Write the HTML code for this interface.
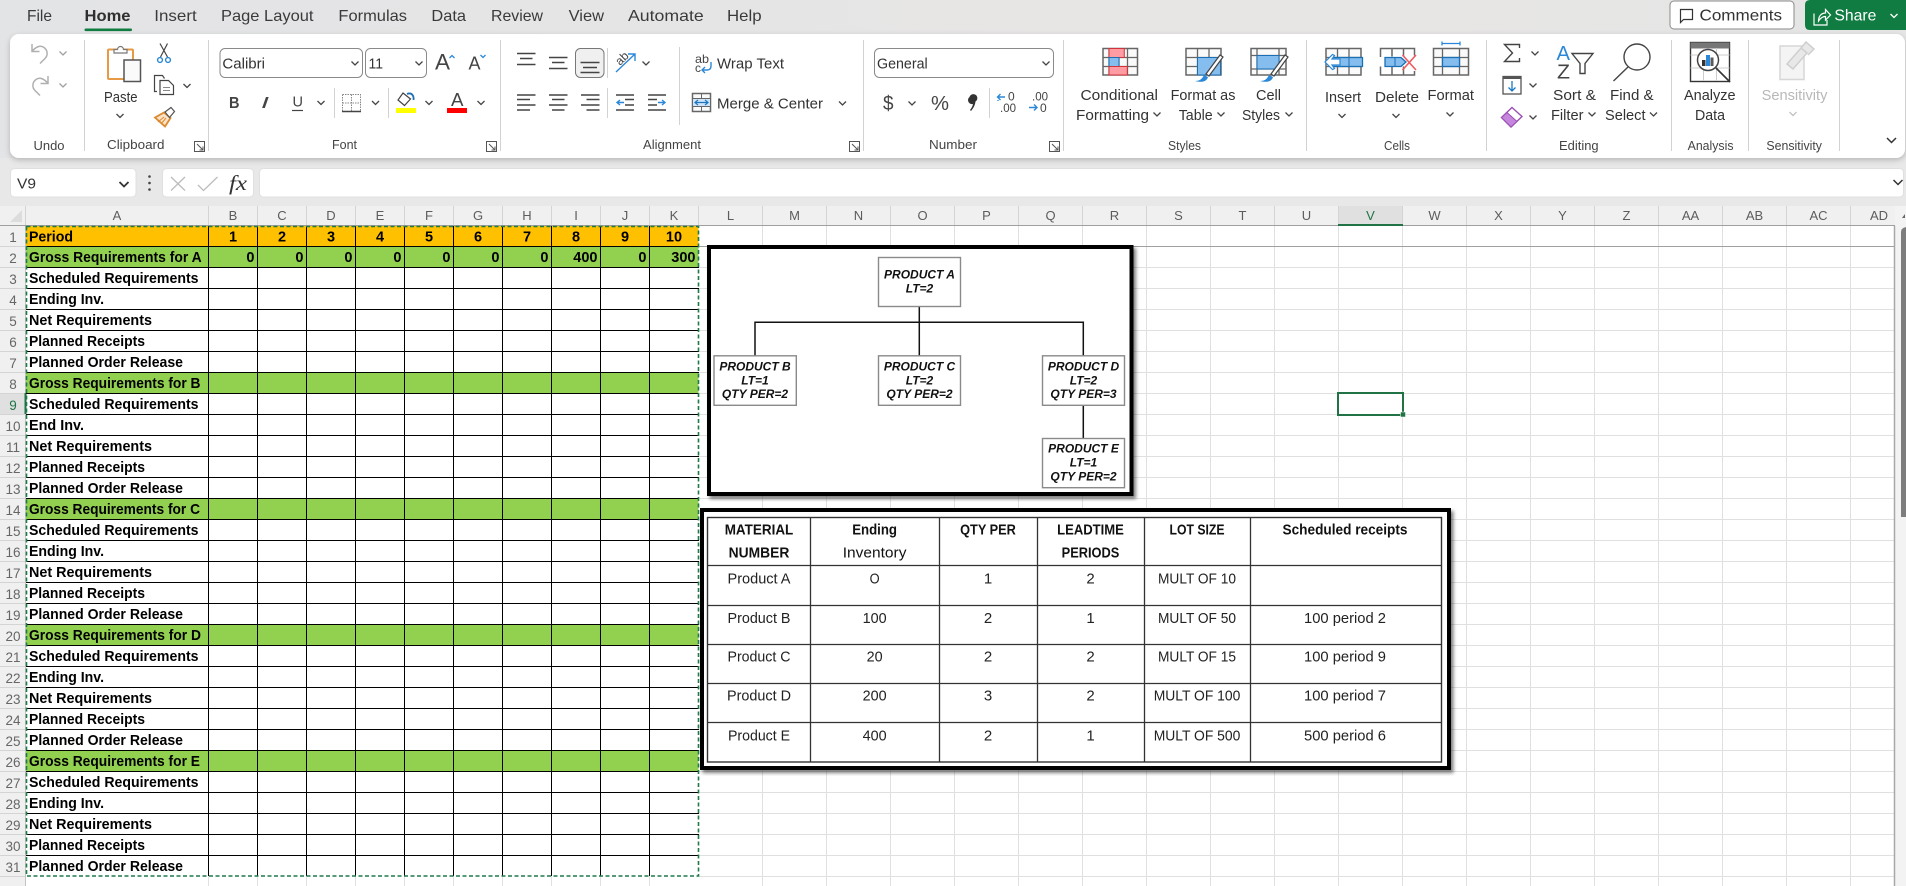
<!DOCTYPE html>
<html lang="en"><head><meta charset="utf-8"><title>Excel MRP</title>
<style>
html,body{margin:0;padding:0;width:1906px;height:886px;overflow:hidden;background:#fff}
svg{display:block}
text{font-family:"Liberation Sans",Arial,sans-serif;white-space:pre}
.tab{font-size:16px;fill:#3a3a3a}
.rb{font-size:14.5px;fill:#333}
.lb{font-size:13px;fill:#444}
.hd{font-size:13px;fill:#5c5c5c;text-anchor:middle}
.rn{font-size:13.5px;fill:#666;text-anchor:middle}
.a{font-size:15px;font-weight:bold;fill:#000}
.n{font-size:14.5px;font-weight:bold;fill:#000}
.pr{font-size:12px;font-weight:bold;font-style:italic;fill:#111;text-anchor:middle}
.tb{font-size:15px;fill:#222;text-anchor:middle}
.tbh{font-size:15px;font-weight:bold;fill:#111;text-anchor:middle}
.s{fill:none;stroke:#444;stroke-width:1.4}
.sep{stroke:#d2d2d2;stroke-width:1;fill:none}
.ch{fill:none;stroke:#444;stroke-width:1.3}
.tg{fill:#fafafa;stroke:#666;stroke-width:1.5}
.bl{fill:#85bdee;stroke:#1a6fb5;stroke-width:1.3}
</style></head><body>
<svg xmlns="http://www.w3.org/2000/svg" width="1906" height="886" viewBox="0 0 1906 886">
<defs>
<linearGradient id="bg" x1="0" x2="1" y1="0" y2="0"><stop offset="0" stop-color="#e3e4e6"/><stop offset=".65" stop-color="#e8e6e5"/><stop offset="1" stop-color="#e5e5e5"/></linearGradient>
<filter id="sh" x="-2%" y="-10%" width="104%" height="125%"><feDropShadow dx="0" dy="2" stdDeviation="3" flood-color="#000" flood-opacity=".22"/></filter>
<filter id="ish" x="-3%" y="-3%" width="106%" height="106%"><feDropShadow dx="2.5" dy="3" stdDeviation="1.8" flood-color="#000" flood-opacity=".5"/></filter>
<path id="c" d="M-3.5-1.5 0 2 3.5-1.5" fill="none" stroke="#444" stroke-width="1.3"/>
<path id="dl" d="M.5.5h10v10H.5z M.5.5v10h10 M3 3l6 6M9 5.5V9H5.5" fill="none" stroke="#555" stroke-width="1"/>
</defs>

<!-- top background -->
<rect width="1906" height="206" fill="url(#bg)"/>
<rect y="158" width="1906" height="48" fill="#e8e8e8"/>

<!-- tabs -->
<text class="tab" x="27" y="21" textLength="25" lengthAdjust="spacingAndGlyphs">File</text>
<text class="tab" x="84.5" y="21" textLength="46" lengthAdjust="spacingAndGlyphs" style="font-weight:bold;fill:#2f2f2f">Home</text>
<rect x="84.5" y="28.5" width="47.5" height="2.6" rx="1.3" fill="#107c41"/>
<text class="tab" x="154.3" y="21" textLength="42.4" lengthAdjust="spacingAndGlyphs">Insert</text>
<text class="tab" x="221" y="21" textLength="92.5" lengthAdjust="spacingAndGlyphs">Page Layout</text>
<text class="tab" x="338.4" y="21" textLength="68.6" lengthAdjust="spacingAndGlyphs">Formulas</text>
<text class="tab" x="431.4" y="21" textLength="34.6" lengthAdjust="spacingAndGlyphs">Data</text>
<text class="tab" x="491" y="21" textLength="52" lengthAdjust="spacingAndGlyphs">Review</text>
<text class="tab" x="568.6" y="21" textLength="35.4" lengthAdjust="spacingAndGlyphs">View</text>
<text class="tab" x="628" y="21" textLength="75.7" lengthAdjust="spacingAndGlyphs">Automate</text>
<text class="tab" x="727" y="21" textLength="34.6" lengthAdjust="spacingAndGlyphs">Help</text>

<!-- comments / share -->
<rect x="1670" y="1" width="124" height="28" rx="4" fill="#fff" stroke="#8a8a8a"/>
<path d="M1680.5 9.5h12v10h-9l-3 3z" fill="none" stroke="#333" stroke-width="1.2"/>
<text class="tab" x="1699.5" y="20.5" textLength="82.5" lengthAdjust="spacingAndGlyphs" style="fill:#333">Comments</text>
<path d="M1810 0h100v30h-100q-5 0-5-5V5q0-5 5-5z" fill="#107c41"/>
<path d="M1814 13.5v11.5h13v-5 M1818.5 21c0-5 3-8 7-8v-3.500l5 5.500-5 5v-3.500c-3 0-5 1.500-7 4.500z" fill="none" stroke="#fff" stroke-width="1.2"/>
<text class="tab" x="1834.400" y="20.500" textLength="42" lengthAdjust="spacingAndGlyphs" style="fill:#fff">Share</text>
<path d="M1890.500 14l3.500 3.500 3.500-3.500" fill="none" stroke="#fff" stroke-width="1.3"/>

<!-- ribbon -->
<rect x="10" y="34" width="1895" height="124" rx="9" fill="#fff" filter="url(#sh)"/>
<path class="sep" d="M84.500 40v111M208.500 40v111M500.500 40v111M863.500 40v111M1063.500 40v111M1306.500 40v111M1486.500 40v111M1671.500 40v111M1748.500 40v111M1839.500 40v111"/>

<!-- group labels -->
<text class="lb" x="33.500" y="150" textLength="31" lengthAdjust="spacingAndGlyphs">Undo</text>
<text class="lb" x="107" y="149" textLength="57.500" lengthAdjust="spacingAndGlyphs">Clipboard</text>
<text class="lb" x="332" y="149" textLength="25" lengthAdjust="spacingAndGlyphs">Font</text>
<text class="lb" x="643" y="149" textLength="58" lengthAdjust="spacingAndGlyphs">Alignment</text>
<text class="lb" x="929" y="149" textLength="48" lengthAdjust="spacingAndGlyphs">Number</text>
<text class="lb" x="1168" y="150" textLength="33" lengthAdjust="spacingAndGlyphs">Styles</text>
<text class="lb" x="1384" y="150" textLength="26" lengthAdjust="spacingAndGlyphs">Cells</text>
<text class="lb" x="1559" y="150" textLength="39.600" lengthAdjust="spacingAndGlyphs">Editing</text>
<text class="lb" x="1687.600" y="150" textLength="45.900" lengthAdjust="spacingAndGlyphs">Analysis</text>
<text class="lb" x="1766.400" y="150" textLength="55.600" lengthAdjust="spacingAndGlyphs">Sensitivity</text>
<use href="#dl" x="194" y="141"/><use href="#dl" x="486" y="141"/><use href="#dl" x="849" y="141"/><use href="#dl" x="1049" y="141"/>

<!-- undo redo -->
<path d="M32 44v7.500h7.500M32 51.500c3-4 8-7 12-4 4 3 4 8 1 11l-5 5" fill="none" stroke="#b0b0b0" stroke-width="1.500"/>
<path d="M48 76v7.500h-7.500M48 83.500c-3-4-8-7-12-4-4 3-4 8-1 11l5 5" fill="none" stroke="#b0b0b0" stroke-width="1.500"/>
<g opacity=".5"><use href="#c" x="63" y="53"/><use href="#c" x="63" y="85"/></g>

<!-- clipboard -->
<rect x="108" y="49.500" width="25" height="29.500" rx="1" fill="#fff" stroke="#e69a45" stroke-width="2"/>
<path d="M114 53v-3.500h3.500a3 3 0 0 1 6 0h3.500v3.500z" fill="#fff" stroke="#777" stroke-width="1.200"/>
<rect x="124" y="60" width="16.500" height="21.500" fill="#fafafa" stroke="#555" stroke-width="1.500"/>
<text class="rb" x="104" y="102" textLength="33.500" lengthAdjust="spacingAndGlyphs">Paste</text>
<use href="#c" x="120" y="115.500"/>
<path d="M167.500 43.500 160.500 57M160 43.500 167.500 57" fill="none" stroke="#444" stroke-width="1.200"/>
<circle cx="160" cy="60" r="2.400" fill="none" stroke="#2b88d8" stroke-width="1.400"/><circle cx="168" cy="60" r="2.400" fill="none" stroke="#2b88d8" stroke-width="1.400"/>
<path d="M157 91.500h-2.500v-16h8l2 3" fill="none" stroke="#444" stroke-width="1.200"/>
<path d="M160 80.500h8.500l5 5v9h-13.500z" fill="#fff" stroke="#444" stroke-width="1.200"/>
<path d="M163 87.500h7M163 90.500h7" stroke="#888"/>
<use href="#c" x="187" y="85.500"/>
<path d="M155 117.500l9-5 6.500 5.500-5.500 8.500z" fill="#fbe3c8" stroke="#dc8a30" stroke-width="1.800"/>
<path d="M158 122l6-5M161 124l5-6" stroke="#dc8a30"/>
<path d="M165 112l6-4.500 3.500 4-5 6z" fill="#fff" stroke="#555" stroke-width="1.200"/>

<!-- font -->
<rect x="220" y="48.500" width="142.500" height="29" rx="5" fill="#fff" stroke="#8a8a8a"/>
<rect x="365.500" y="48.500" width="61" height="29" rx="5" fill="#fff" stroke="#8a8a8a"/>
<text x="222.400" y="68.300" font-size="14.500" fill="#333" textLength="42.600" lengthAdjust="spacingAndGlyphs">Calibri</text>
<use href="#c" x="355" y="63"/>
<text x="368.500" y="68.300" font-size="14.500" fill="#333" textLength="14.500" lengthAdjust="spacingAndGlyphs">11</text>
<use href="#c" x="419" y="63"/>
<text x="435" y="69.500" font-size="22" fill="#444" textLength="15" lengthAdjust="spacingAndGlyphs">A</text>
<path d="M449.500 58l2.500-2.500 2.500 2.500" fill="none" stroke="#2b88d8" stroke-width="1.300"/>
<text x="468.500" y="69.500" font-size="18" fill="#444" textLength="12" lengthAdjust="spacingAndGlyphs">A</text>
<path d="M480.500 55l2.500 2.500 2.500-2.500" fill="none" stroke="#2b88d8" stroke-width="1.300"/>
<text x="229" y="108" font-size="16" font-weight="bold" fill="#444" textLength="10.500" lengthAdjust="spacingAndGlyphs">B</text>
<text x="261" y="108" font-size="16" font-style="italic" fill="#444" textLength="8" lengthAdjust="spacingAndGlyphs">I</text>
<text x="292.500" y="106.500" font-size="15" fill="#444" textLength="10.500" lengthAdjust="spacingAndGlyphs">U</text>
<path d="M292 110.500h11" stroke="#444" stroke-width="1.200"/>
<use href="#c" x="321" y="102.500"/>
<path class="sep" d="M334.500 88v30M388.500 88v30M607.500 48v30M607.500 88v30M679.500 47v78M989.500 88v30"/>
<path d="M342.500 94.500h18v17M342.500 94.500v17M351.500 94.500v17M342.500 103h18" fill="none" stroke="#888" stroke-width="1" stroke-dasharray="1.500 1"/>
<path d="M342 111.500h19" stroke="#444" stroke-width="1.500"/>
<use href="#c" x="375.500" y="102.500"/>
<path d="M403 93l-5 7 6.500 5.500 6-6.500z" fill="#fff" stroke="#444" stroke-width="1.200"/>
<path d="M407 94c5-2 7 2 6.500 6" fill="none" stroke="#1f6fb5" stroke-width="1.800"/>
<rect x="396" y="108" width="20" height="5" fill="#ffff00"/>
<use href="#c" x="429" y="102.500"/>
<text x="451" y="106" font-size="18" fill="#444" textLength="12.500" lengthAdjust="spacingAndGlyphs">A</text>
<rect x="447" y="108" width="20" height="5" fill="#ff0000"/>
<use href="#c" x="481" y="102.500"/>

<!-- alignment -->
<path d="M517 53.500h18.500M520 58.500h12.500M517 64.500h18.500M549 57.500h18.500M552 62.500h12.500M549 68.500h18.500" class="s"/>
<rect x="575.500" y="48.500" width="28.500" height="29" rx="5" fill="#f0f0f0" stroke="#777"/>
<path d="M580.500 62.500h19M583 67.500h14M580.500 72.500h19" class="s"/>
<text transform="translate(620,66) rotate(-45)" font-size="12" fill="#444">ab</text>
<path d="M616 72l19-18M628 54h7v7" fill="none" stroke="#2b88d8" stroke-width="1.400"/>
<use href="#c" x="646" y="63"/>
<text x="695" y="63" font-size="12" fill="#444" textLength="14" lengthAdjust="spacingAndGlyphs">ab</text>
<text x="695" y="72" font-size="12" fill="#444">c</text>
<path d="M711 62v4q0 4-4 4h-5M705 67l-3 3 3 3" fill="none" stroke="#2b88d8" stroke-width="1.400"/>
<text class="rb" x="717" y="68.500" textLength="67" lengthAdjust="spacingAndGlyphs">Wrap Text</text>
<path d="M517 95h18.500M517 99.500h13M517 105h18.500M517 110h13" class="s"/>
<path d="M549 95h18.500M552 99.500h12.500M549 105h18.500M552 110h12.500" class="s"/>
<path d="M581 95h18.500M586.500 99.500h13M581 105h18.500M586.500 110h13" class="s"/>
<path d="M616 95h18M625 99.500h9M625 105h9M616 110h18" class="s"/>
<path d="M624 102.500h-7M620 100l-3 2.500 3 2.500" fill="none" stroke="#2b88d8" stroke-width="1.400"/>
<path d="M648 95h18M648 99.500h9M648 105h9M648 110h18" class="s"/>
<path d="M658 102.500h7M662 100l3 2.500-3 2.500" fill="none" stroke="#2b88d8" stroke-width="1.400"/>
<rect x="692.500" y="93.500" width="18" height="18" fill="#fafafa" stroke="#666" stroke-width="1.500"/>
<rect x="693" y="98.500" width="17" height="8" fill="#cfe4f7"/>
<path d="M692.500 98.500h18M692.500 106.500h18M701.500 93.500v5M701.500 106.500v5" stroke="#666"/>
<path d="M695 102.500h13M698 100l-3 2.500 3 2.500M705 100l3 2.500-3 2.500" fill="none" stroke="#1a78c2" stroke-width="1.200"/>
<text class="rb" x="717" y="108.700" textLength="106" lengthAdjust="spacingAndGlyphs">Merge &amp; Center</text>
<use href="#c" x="842.500" y="103"/>

<!-- number -->
<rect x="874.500" y="48.500" width="179" height="29" rx="5" fill="#fff" stroke="#8a8a8a"/>
<text x="877" y="68.300" font-size="14.500" fill="#333" textLength="50.700" lengthAdjust="spacingAndGlyphs">General</text>
<use href="#c" x="1046" y="63"/>
<text x="883" y="110" font-size="20" fill="#444" textLength="10.500" lengthAdjust="spacingAndGlyphs">$</text>
<use href="#c" x="912" y="103"/>
<text x="931" y="110" font-size="20" fill="#444" textLength="18" lengthAdjust="spacingAndGlyphs">%</text>
<path d="M969.500 97a4 4 0 1 1 6 4.500q-.5 5-4.500 9.500l-1-1q2.500-3 3-6a4 4 0 0 1-3.500-7z" fill="#333"/>
<path d="M1005 97h-7.500M1000.500 94l-3 3 3 3M998 100v1" fill="none" stroke="#2b88d8" stroke-width="1.400"/>
<text x="1008" y="100.500" font-size="12" fill="#444">0</text>
<text x="1000" y="112" font-size="12" fill="#444" textLength="16" lengthAdjust="spacingAndGlyphs">.00</text>
<text x="1032" y="100.500" font-size="12" fill="#444" textLength="16" lengthAdjust="spacingAndGlyphs">.00</text>
<path d="M1029 107.500h8M1034 104.500l3 3-3 3" fill="none" stroke="#2b88d8" stroke-width="1.400"/>
<text x="1040" y="112" font-size="12" fill="#444">0</text>

<!-- conditional formatting -->
<path class="tg" d="M1103 48.500h34.500v26.500h-34.500z"/>
<path d="M1109 48.500v26.500M1119 48.500v26.500M1127.500 48.500v26.500M1103 57.500h34.500M1103 66.500h34.500" stroke="#666" stroke-width="1.300"/>
<rect x="1109" y="48.500" width="15.300" height="9" fill="#ff9ca3" stroke="#d13438"/>
<rect x="1109" y="57.500" width="10" height="9" fill="#85bdee" stroke="#1a6fb5"/>
<rect x="1109" y="66.500" width="18.300" height="8.500" fill="#ff9ca3" stroke="#d13438"/>
<text class="rb" x="1080.500" y="100" textLength="77.500" lengthAdjust="spacingAndGlyphs">Conditional</text>
<text class="rb" x="1076" y="120" textLength="73" lengthAdjust="spacingAndGlyphs">Formatting</text>
<use href="#c" x="1157" y="114"/>

<!-- format as table -->
<path class="tg" d="M1186 48.500h35v26.500h-35z"/>
<path d="M1197.500 48.500v26.500M1209 48.500v26.500M1186 57.500h35M1186 66.500h35" stroke="#666" stroke-width="1.300"/>
<rect x="1197.500" y="57.500" width="23" height="17.500" fill="#85bdee" stroke="#1a6fb5"/>
<path d="M1223 57l-14 19-3-2 14-19z" fill="#fff" stroke="#444" stroke-width="1.200"/>
<path d="M1195 81c5 0 7-2 9-6l4 2c-1 4-5 6-13 4z" fill="#2b88d8"/>
<text class="rb" x="1170.600" y="100" textLength="64.800" lengthAdjust="spacingAndGlyphs">Format as</text>
<text class="rb" x="1178.700" y="120" textLength="34" lengthAdjust="spacingAndGlyphs">Table</text>
<use href="#c" x="1221" y="114"/>

<!-- cell styles -->
<path class="tg" d="M1251 48.500h35v26.500h-35z"/>
<path d="M1257 48.500v26.500M1279 48.500v26.500M1251 55.500h35M1251 69h35" stroke="#666" stroke-width="1.300"/>
<rect x="1257" y="55.500" width="22" height="13.500" fill="#85bdee" stroke="#1a6fb5"/>
<path d="M1288 57l-14 19-3-2 14-19z" fill="#fff" stroke="#444" stroke-width="1.200"/>
<path d="M1260 81c5 0 7-2 9-6l4 2c-1 4-5 6-13 4z" fill="#2b88d8"/>
<text class="rb" x="1256" y="100" textLength="25" lengthAdjust="spacingAndGlyphs">Cell</text>
<text class="rb" x="1242" y="120" textLength="38" lengthAdjust="spacingAndGlyphs">Styles</text>
<use href="#c" x="1289" y="114"/>

<!-- insert -->
<path class="tg" d="M1326 48.500h35v26.500h-35z"/>
<path d="M1337.500 48.500v26.500M1349 48.500v26.500M1326 57.500h35M1326 66.500h35" stroke="#666" stroke-width="1.300"/>
<rect x="1331" y="57.500" width="31.500" height="9" class="bl"/>
<path d="M1349 57.500v9" stroke="#1a6fb5"/>
<path d="M1340 59h-8l2.500-3.500-2-1-7.500 7.500 7.500 7.500 2-1-2.500-3.500h8z" fill="#fff" stroke="#2b88d8" stroke-width="1.200"/>
<text class="rb" x="1325" y="102" textLength="36" lengthAdjust="spacingAndGlyphs">Insert</text>
<use href="#c" x="1342" y="115.500"/>

<!-- delete -->
<path d="M1380.500 57v-8.500h34v7M1380.500 66.500v8.500h34v-4M1392 48.500v8M1403.500 48.500v8M1392 66.500v8.500M1403.500 66.500v8.500" fill="none" stroke="#666" stroke-width="1.500"/>
<path d="M1385 57.500h16l5 4.500-5 4.500h-16z" class="bl"/>
<path d="M1395 57.500v9" stroke="#1a6fb5"/>
<path d="M1402.500 55l13.500 15M1416 55l-13.500 15" stroke="#ef5a5f" stroke-width="1.600" fill="none"/>
<text class="rb" x="1375" y="102" textLength="44" lengthAdjust="spacingAndGlyphs">Delete</text>
<use href="#c" x="1396" y="115.500"/>

<!-- format -->
<path class="tg" d="M1433.500 48.500h35v26.500h-35z"/>
<path d="M1442.500 48.500v26.500M1459.500 48.500v26.500M1433.500 57.500h35M1433.500 66.500h35" stroke="#666" stroke-width="1.300"/>
<rect x="1442.500" y="57.500" width="17" height="9" class="bl"/>
<path d="M1442 43.500h18M1442 41.500v4M1460 41.500v4" stroke="#2b88d8" stroke-width="1.300" fill="none"/>
<text class="rb" x="1427.500" y="100" textLength="46.500" lengthAdjust="spacingAndGlyphs">Format</text>
<use href="#c" x="1450" y="114"/>

<!-- editing -->
<path d="M1519.500 48v-3.500h-15l8 8.500-8 8.500h15V58" fill="none" stroke="#444" stroke-width="1.400"/>
<use href="#c" x="1535" y="53"/>
<rect x="1503" y="76.500" width="18" height="17.500" fill="#fff" stroke="#555" stroke-width="1.300"/>
<rect x="1503" y="76" width="18" height="3" fill="#555"/>
<path d="M1512 81v10M1508.500 87.500l3.500 3.500 3.500-3.500" fill="none" stroke="#1a78c2" stroke-width="1.300"/>
<use href="#c" x="1533" y="85"/>
<path d="M1512 107.500l10 9-11 10.500-9.500-9.500z" fill="#fff" stroke="#9a4fb5" stroke-width="1.400"/>
<path d="M1507 112.500l10 9-6 5.500-9.500-9.500z" fill="#c786dd" stroke="#9a4fb5"/>
<use href="#c" x="1533" y="117"/>
<text x="1556.500" y="60" font-size="20" fill="#2b88d8" textLength="13.500" lengthAdjust="spacingAndGlyphs">A</text>
<text x="1557" y="78.500" font-size="20" fill="#444" textLength="13" lengthAdjust="spacingAndGlyphs">Z</text>
<path d="M1572 53.500h21l-8 10v10l-5 0v-10z" fill="#fff" stroke="#444" stroke-width="1.400"/>
<text class="rb" x="1553" y="100" textLength="43" lengthAdjust="spacingAndGlyphs">Sort &amp;</text>
<text class="rb" x="1551" y="120" textLength="32.500" lengthAdjust="spacingAndGlyphs">Filter</text>
<use href="#c" x="1592" y="114"/>
<circle cx="1637" cy="57" r="13" fill="#fff" stroke="#444" stroke-width="1.400"/>
<path d="M1628 67l-14.500 14" stroke="#444" stroke-width="1.400"/>
<text class="rb" x="1610" y="100" textLength="43.600" lengthAdjust="spacingAndGlyphs">Find &amp;</text>
<text class="rb" x="1605" y="120" textLength="40.500" lengthAdjust="spacingAndGlyphs">Select</text>
<use href="#c" x="1653.500" y="114"/>

<!-- analyze -->
<rect x="1690.500" y="42.500" width="39" height="39" fill="#fff" stroke="#333" stroke-width="1.400"/>
<rect x="1690.500" y="42.500" width="39" height="6" fill="#777"/>
<path d="M1690.500 55h39M1690.500 68h39M1703.500 48v33M1716.500 48v33" stroke="#ccc"/>
<circle cx="1708" cy="60" r="10.500" fill="#fff" stroke="#444" stroke-width="1.500"/>
<rect x="1702" y="60" width="3.500" height="6" fill="#333"/><rect x="1706" y="55" width="4" height="11" fill="#2b88d8"/><rect x="1710.500" y="57.500" width="3" height="8.500" fill="#5a5a5a"/>
<path d="M1716 68l14 14" stroke="#333" stroke-width="1.600"/>
<text class="rb" x="1684" y="100" textLength="51.600" lengthAdjust="spacingAndGlyphs">Analyze</text>
<text class="rb" x="1695" y="120" textLength="30" lengthAdjust="spacingAndGlyphs">Data</text>

<!-- sensitivity -->
<rect x="1780" y="46" width="24" height="33.500" fill="#f4f4f4" stroke="#d6d6d6" stroke-width="1.500"/>
<path d="M1787 64l14-16 6 5-14 16zM1801 48l5-6 8 7-6 6" fill="#e8e8e8" stroke="#cfcfcf" stroke-width="1.500"/>
<text class="rb" x="1761.600" y="100" textLength="65.800" lengthAdjust="spacingAndGlyphs" style="fill:#b8b8b8">Sensitivity</text>
<path d="M1789.500 112l3.500 3.500 3.500-3.500" fill="none" stroke="#bbb" stroke-width="1.200"/>
<path d="M1887 138l4.500 4.500 4.500-4.500" fill="none" stroke="#333" stroke-width="1.500"/>

<!-- formula bar -->
<rect x="10.500" y="168.500" width="125.500" height="28.500" rx="4" fill="#fff" stroke="#e0e0e0"/>
<text x="17" y="188.500" font-size="15" fill="#333" textLength="19" lengthAdjust="spacingAndGlyphs">V9</text>
<path d="M119.500 182l4.500 4.500 4.500-4.500" fill="none" stroke="#333" stroke-width="1.800"/>
<circle cx="149.500" cy="176.500" r="1.300" fill="#444"/><circle cx="149.500" cy="183" r="1.300" fill="#444"/><circle cx="149.500" cy="189.500" r="1.300" fill="#444"/>
<rect x="162.500" y="168.500" width="91" height="28.500" rx="4" fill="#fff" stroke="#e0e0e0"/>
<path d="M171 177l14 13.500M185 177l-14 13.500" stroke="#bcbcbc" stroke-width="1.300"/>
<path d="M198 185l5.500 5.500 14-13.500" fill="none" stroke="#bcbcbc" stroke-width="1.300"/>
<text x="229" y="190" font-family="Liberation Serif" style="font-family:'Liberation Serif',serif" font-size="21" font-style="italic" fill="#333" textLength="18" lengthAdjust="spacingAndGlyphs">fx</text>
<rect x="259.500" y="168.500" width="1644" height="28.500" rx="4" fill="#fff" stroke="#e0e0e0"/>
<path d="M1893.500 180l4.500 4.500 4.500-4.500" fill="none" stroke="#333" stroke-width="1.500"/>

<!-- sheet background -->
<rect x="0" y="206" width="1906" height="680" fill="#fff"/>
<rect x="1895" y="206" width="11" height="680" fill="#f3f3f3"/>
<path d="M1901 232q0-4 5-5v290h-5z" fill="#7d7d7d"/>
<path d="M1902 218l3-4v4z" fill="#666"/>
<!-- column header -->
<rect x="0" y="206" width="1895" height="20" fill="#f0f0f0"/>
<path d="M22 210v12H10z" fill="#dcdcdc"/>
<rect x="1338" y="206" width="64.500" height="20" fill="#e0e0e0"/>
<!-- row header -->
<rect x="0" y="226" width="26" height="660" fill="#f0f0f0"/>
<rect x="0" y="393" width="26" height="21" fill="#e0e0e0"/>

<!-- light gridlines -->
<path fill="none" stroke="#e0e0e0" stroke-width="1" d="M762.500 226V886M826.500 226V886M890.500 226V886M954.500 226V886M1018.500 226V886M1082.500 226V886M1146.500 226V886M1210.500 226V886M1274.500 226V886M1338.500 226V886M1402.500 226V886M1466.500 226V886M1530.500 226V886M1594.500 226V886M1658.500 226V886M1722.500 226V886M1786.500 226V886M1850.500 226V886M208.500 876V886M257.500 876V886M306.500 876V886M355.500 876V886M404.500 876V886M453.500 876V886M502.500 876V886M551.500 876V886M600.500 876V886M649.500 876V886"/>
<path fill="none" stroke="#e0e0e0" stroke-width="1" d="M699 267.500H1894M699 288.500H1894M699 309.500H1894M699 330.500H1894M699 351.500H1894M699 372.500H1894M699 393.500H1894M699 414.500H1894M699 435.500H1894M699 456.500H1894M699 477.500H1894M699 498.500H1894M699 519.500H1894M699 540.500H1894M699 561.500H1894M699 582.500H1894M699 603.500H1894M699 624.500H1894M699 645.500H1894M699 666.500H1894M699 687.500H1894M699 708.500H1894M699 729.500H1894M699 750.500H1894M699 771.500H1894M699 792.500H1894M699 813.500H1894M699 834.500H1894M699 855.500H1894M699 876.500H1894"/>
<path d="M699 246.500H1894" stroke="#a0a0a0"/>
<path d="M1894.500 226V886" stroke="#a8a8a8" stroke-width="1.500"/>

<!-- header separators -->
<path stroke="#d4d4d4" fill="none" d="M25.500 206V226M208.500 206V225M257.500 206V225M306.500 206V225M355.500 206V225M404.500 206V225M453.500 206V225M502.500 206V225M551.500 206V225M600.500 206V225M649.500 206V225M698.500 206V225M762.500 206V225M826.500 206V225M890.500 206V225M954.500 206V225M1018.500 206V225M1082.500 206V225M1146.500 206V225M1210.500 206V225M1274.500 206V225M1338.500 206V225M1402.500 206V225M1466.500 206V225M1530.500 206V225M1594.500 206V225M1658.500 206V225M1722.500 206V225M1786.500 206V225M1850.500 206V225"/>
<path d="M0 225.500H1895" stroke="#a0a0a0"/>
<path d="M1338 225h65" stroke="#217346" stroke-width="2"/>
<path stroke="#d4d4d4" fill="none" d="M0 246.500H25M0 267.500H25M0 288.500H25M0 309.500H25M0 330.500H25M0 351.500H25M0 372.500H25M0 393.500H25M0 414.500H25M0 435.500H25M0 456.500H25M0 477.500H25M0 498.500H25M0 519.500H25M0 540.500H25M0 561.500H25M0 582.500H25M0 603.500H25M0 624.500H25M0 645.500H25M0 666.500H25M0 687.500H25M0 708.500H25M0 729.500H25M0 750.500H25M0 771.500H25M0 792.500H25M0 813.500H25M0 834.500H25M0 855.500H25M0 876.500H25"/>
<path d="M25.500 226V886" stroke="#c4c4c4"/>
<path d="M25.500 393V414" stroke="#217346" stroke-width="2"/>

<g class="hdg">
<text class="hd" x="117" y="220">A</text><text class="hd" x="233" y="220">B</text><text class="hd" x="282" y="220">C</text><text class="hd" x="331" y="220">D</text><text class="hd" x="380" y="220">E</text><text class="hd" x="429" y="220">F</text><text class="hd" x="478" y="220">G</text><text class="hd" x="527" y="220">H</text><text class="hd" x="576" y="220">I</text><text class="hd" x="625" y="220">J</text><text class="hd" x="674" y="220">K</text>
<text class="hd" x="730.500" y="220">L</text><text class="hd" x="794.500" y="220">M</text><text class="hd" x="858.500" y="220">N</text><text class="hd" x="922.500" y="220">O</text><text class="hd" x="986.500" y="220">P</text><text class="hd" x="1050.500" y="220">Q</text><text class="hd" x="1114.500" y="220">R</text><text class="hd" x="1178.500" y="220">S</text><text class="hd" x="1242.500" y="220">T</text><text class="hd" x="1306.500" y="220">U</text><text class="hd" x="1370.500" y="220" style="fill:#217346">V</text><text class="hd" x="1434.500" y="220">W</text><text class="hd" x="1498.500" y="220">X</text><text class="hd" x="1562.500" y="220">Y</text><text class="hd" x="1626.500" y="220">Z</text><text class="hd" x="1690.500" y="220">AA</text><text class="hd" x="1754.500" y="220">AB</text><text class="hd" x="1818.500" y="220">AC</text><text class="hd" x="1879" y="220">AD</text>
</g>

<!-- row numbers -->
<text class="rn" x="13" y="242">1</text><text class="rn" x="13" y="263">2</text><text class="rn" x="13" y="284">3</text><text class="rn" x="13" y="305">4</text><text class="rn" x="13" y="326">5</text><text class="rn" x="13" y="347">6</text><text class="rn" x="13" y="368">7</text><text class="rn" x="13" y="389">8</text><text class="rn" x="13" y="410" style="fill:#217346">9</text><text class="rn" x="13" y="431">10</text><text class="rn" x="13" y="452">11</text><text class="rn" x="13" y="473">12</text><text class="rn" x="13" y="494">13</text><text class="rn" x="13" y="515">14</text><text class="rn" x="13" y="536">15</text><text class="rn" x="13" y="557">16</text><text class="rn" x="13" y="578">17</text><text class="rn" x="13" y="599">18</text><text class="rn" x="13" y="620">19</text><text class="rn" x="13" y="641">20</text><text class="rn" x="13" y="662">21</text><text class="rn" x="13" y="683">22</text><text class="rn" x="13" y="704">23</text><text class="rn" x="13" y="725">24</text><text class="rn" x="13" y="746">25</text><text class="rn" x="13" y="767">26</text><text class="rn" x="13" y="788">27</text><text class="rn" x="13" y="809">28</text><text class="rn" x="13" y="830">29</text><text class="rn" x="13" y="851">30</text><text class="rn" x="13" y="872">31</text>

<!-- fills -->
<rect x="26" y="226" width="672.500" height="20" fill="#ffc000"/>
<rect x="26" y="246" width="672.500" height="21" fill="#92d050"/>
<rect x="26" y="372" width="672.500" height="21" fill="#92d050"/>
<rect x="26" y="498" width="672.500" height="21" fill="#92d050"/>
<rect x="26" y="624" width="672.500" height="21" fill="#92d050"/>
<rect x="26" y="750" width="672.500" height="21" fill="#92d050"/>

<!-- black grid -->
<path fill="none" stroke="#000" stroke-width="1" d="M208.500 226V876M257.500 226V876M306.500 226V876M355.500 226V876M404.500 226V876M453.500 226V876M502.500 226V876M551.500 226V876M600.500 226V876M649.500 226V876"/>
<path fill="none" stroke="#000" stroke-width="1" d="M26 246.500H699M26 267.500H699M26 288.500H699M26 309.500H699M26 330.500H699M26 351.500H699M26 372.500H699M26 393.500H699M26 414.500H699M26 435.500H699M26 456.500H699M26 477.500H699M26 498.500H699M26 519.500H699M26 540.500H699M26 561.500H699M26 582.500H699M26 603.500H699M26 624.500H699M26 645.500H699M26 666.500H699M26 687.500H699M26 708.500H699M26 729.500H699M26 750.500H699M26 771.500H699M26 792.500H699M26 813.500H699M26 834.500H699M26 855.500H699"/>
<!-- marching ants -->
<rect x="26.500" y="226.500" width="672" height="649.500" fill="none" stroke="#1f7a4a" stroke-width="1.600" stroke-dasharray="4 2.500"/>

<!-- col A text -->
<text class="a" x="29" y="241.500" textLength="44" lengthAdjust="spacingAndGlyphs">Period</text>
<text class="a" x="29" y="262" textLength="172.700" lengthAdjust="spacingAndGlyphs">Gross Requirements for A</text>
<text class="a" x="29" y="283" textLength="169.500" lengthAdjust="spacingAndGlyphs">Scheduled Requirements</text>
<text class="a" x="29" y="304" textLength="75" lengthAdjust="spacingAndGlyphs">Ending Inv.</text>
<text class="a" x="29" y="325" textLength="123" lengthAdjust="spacingAndGlyphs">Net Requirements</text>
<text class="a" x="29" y="346" textLength="116" lengthAdjust="spacingAndGlyphs">Planned Receipts</text>
<text class="a" x="29" y="367" textLength="154" lengthAdjust="spacingAndGlyphs">Planned Order Release</text>
<text class="a" x="29" y="388" textLength="171.500" lengthAdjust="spacingAndGlyphs">Gross Requirements for B</text>
<text class="a" x="29" y="409" textLength="169.500" lengthAdjust="spacingAndGlyphs">Scheduled Requirements</text>
<text class="a" x="29" y="430" textLength="55" lengthAdjust="spacingAndGlyphs">End Inv.</text>
<text class="a" x="29" y="451" textLength="123" lengthAdjust="spacingAndGlyphs">Net Requirements</text>
<text class="a" x="29" y="472" textLength="116" lengthAdjust="spacingAndGlyphs">Planned Receipts</text>
<text class="a" x="29" y="493" textLength="154" lengthAdjust="spacingAndGlyphs">Planned Order Release</text>
<text class="a" x="29" y="514" textLength="171" lengthAdjust="spacingAndGlyphs">Gross Requirements for C</text>
<text class="a" x="29" y="535" textLength="169.500" lengthAdjust="spacingAndGlyphs">Scheduled Requirements</text>
<text class="a" x="29" y="556" textLength="75" lengthAdjust="spacingAndGlyphs">Ending Inv.</text>
<text class="a" x="29" y="577" textLength="123" lengthAdjust="spacingAndGlyphs">Net Requirements</text>
<text class="a" x="29" y="598" textLength="116" lengthAdjust="spacingAndGlyphs">Planned Receipts</text>
<text class="a" x="29" y="619" textLength="154" lengthAdjust="spacingAndGlyphs">Planned Order Release</text>
<text class="a" x="29" y="640" textLength="172" lengthAdjust="spacingAndGlyphs">Gross Requirements for D</text>
<text class="a" x="29" y="661" textLength="169.500" lengthAdjust="spacingAndGlyphs">Scheduled Requirements</text>
<text class="a" x="29" y="682" textLength="75" lengthAdjust="spacingAndGlyphs">Ending Inv.</text>
<text class="a" x="29" y="703" textLength="123" lengthAdjust="spacingAndGlyphs">Net Requirements</text>
<text class="a" x="29" y="724" textLength="116" lengthAdjust="spacingAndGlyphs">Planned Receipts</text>
<text class="a" x="29" y="745" textLength="154" lengthAdjust="spacingAndGlyphs">Planned Order Release</text>
<text class="a" x="29" y="766" textLength="171" lengthAdjust="spacingAndGlyphs">Gross Requirements for E</text>
<text class="a" x="29" y="787" textLength="169.500" lengthAdjust="spacingAndGlyphs">Scheduled Requirements</text>
<text class="a" x="29" y="808" textLength="75" lengthAdjust="spacingAndGlyphs">Ending Inv.</text>
<text class="a" x="29" y="829" textLength="123" lengthAdjust="spacingAndGlyphs">Net Requirements</text>
<text class="a" x="29" y="850" textLength="116" lengthAdjust="spacingAndGlyphs">Planned Receipts</text>
<text class="a" x="29" y="871" textLength="154" lengthAdjust="spacingAndGlyphs">Planned Order Release</text>

<!-- row 1 numbers -->
<g text-anchor="middle">
<text class="n" x="233" y="241.500">1</text><text class="n" x="282" y="241.500">2</text><text class="n" x="331" y="241.500">3</text><text class="n" x="380" y="241.500">4</text><text class="n" x="429" y="241.500">5</text><text class="n" x="478" y="241.500">6</text><text class="n" x="527" y="241.500">7</text><text class="n" x="576" y="241.500">8</text><text class="n" x="625" y="241.500">9</text><text class="n" x="674" y="241.500">10</text>
</g>
<g text-anchor="end">
<text class="n" x="254.500" y="262">0</text><text class="n" x="303.500" y="262">0</text><text class="n" x="352.500" y="262">0</text><text class="n" x="401.500" y="262">0</text><text class="n" x="450.500" y="262">0</text><text class="n" x="499.500" y="262">0</text><text class="n" x="548.500" y="262">0</text><text class="n" x="597.500" y="262">400</text><text class="n" x="646.500" y="262">0</text><text class="n" x="695.500" y="262">300</text>
</g>

<!-- selected cell -->
<rect x="1338" y="393" width="65" height="22" fill="none" stroke="#217346" stroke-width="2"/>
<rect x="1400.500" y="412" width="5" height="5" fill="#217346" stroke="#fff" stroke-width=".5"/>

<!-- table picture -->
<rect x="702" y="510" width="747" height="258" fill="#fff" stroke="#000" stroke-width="4" filter="url(#ish)"/>
<rect x="707.500" y="517.500" width="734" height="244.500" fill="#fff" stroke="#333" stroke-width="1.400"/>
<path fill="none" stroke="#333" stroke-width="1.300" d="M810.500 517.500V762M939.500 517.500V762M1037.500 517.500V762M1144.500 517.500V762M1250.500 517.500V762M707.500 565.500H1441.500M707.500 605.500H1441.500M707.500 644.500H1441.500M707.500 683.500H1441.500M707.500 722.500H1441.500"/>
<g>
<text class="tbh" x="759" y="534.300" textLength="68.600" lengthAdjust="spacingAndGlyphs">MATERIAL</text>
<text class="tbh" x="759" y="557.300" textLength="60.700" lengthAdjust="spacingAndGlyphs">NUMBER</text>
<text class="tbh" x="874.600" y="534.300" textLength="44.800" lengthAdjust="spacingAndGlyphs">Ending</text>
<text class="tbh" x="874.600" y="557.300" textLength="63.700" lengthAdjust="spacingAndGlyphs" style="font-weight:normal">Inventory</text>
<text class="tbh" x="988" y="534.300" textLength="55.700" lengthAdjust="spacingAndGlyphs">QTY PER</text>
<text class="tbh" x="1090.500" y="534.300" textLength="66.700" lengthAdjust="spacingAndGlyphs">LEADTIME</text>
<text class="tbh" x="1090.500" y="557.300" textLength="57.700" lengthAdjust="spacingAndGlyphs">PERIODS</text>
<text class="tbh" x="1197" y="534.300" textLength="55" lengthAdjust="spacingAndGlyphs">LOT SIZE</text>
<text class="tbh" x="1345" y="534.300" textLength="125" lengthAdjust="spacingAndGlyphs">Scheduled receipts</text>

<text class="tb" x="759" y="583.300" textLength="63" lengthAdjust="spacingAndGlyphs">Product A</text>
<text class="tb" x="874.600" y="583.300" textLength="10" lengthAdjust="spacingAndGlyphs">O</text>
<text class="tb" x="988" y="583.300">1</text><text class="tb" x="1090.500" y="583.300">2</text>
<text class="tb" x="1197" y="583.300" textLength="78" lengthAdjust="spacingAndGlyphs">MULT OF 10</text>

<text class="tb" x="759" y="623" textLength="63" lengthAdjust="spacingAndGlyphs">Product B</text>
<text class="tb" x="874.600" y="623" textLength="24" lengthAdjust="spacingAndGlyphs">100</text>
<text class="tb" x="988" y="623">2</text><text class="tb" x="1090.500" y="623">1</text>
<text class="tb" x="1197" y="623" textLength="78" lengthAdjust="spacingAndGlyphs">MULT OF 50</text>
<text class="tb" x="1345" y="623" textLength="82" lengthAdjust="spacingAndGlyphs">100 period 2</text>

<text class="tb" x="759" y="661.700" textLength="63" lengthAdjust="spacingAndGlyphs">Product C</text>
<text class="tb" x="874.600" y="661.700" textLength="16" lengthAdjust="spacingAndGlyphs">20</text>
<text class="tb" x="988" y="661.700">2</text><text class="tb" x="1090.500" y="661.700">2</text>
<text class="tb" x="1197" y="661.700" textLength="78" lengthAdjust="spacingAndGlyphs">MULT OF 15</text>
<text class="tb" x="1345" y="661.700" textLength="82" lengthAdjust="spacingAndGlyphs">100 period 9</text>

<text class="tb" x="759" y="700.300" textLength="64" lengthAdjust="spacingAndGlyphs">Product D</text>
<text class="tb" x="874.600" y="700.300" textLength="24" lengthAdjust="spacingAndGlyphs">200</text>
<text class="tb" x="988" y="700.300">3</text><text class="tb" x="1090.500" y="700.300">2</text>
<text class="tb" x="1197" y="700.300" textLength="86.600" lengthAdjust="spacingAndGlyphs">MULT OF 100</text>
<text class="tb" x="1345" y="700.300" textLength="82" lengthAdjust="spacingAndGlyphs">100 period 7</text>

<text class="tb" x="759" y="740.300" textLength="62" lengthAdjust="spacingAndGlyphs">Product E</text>
<text class="tb" x="874.600" y="740.300" textLength="24" lengthAdjust="spacingAndGlyphs">400</text>
<text class="tb" x="988" y="740.300">2</text><text class="tb" x="1090.500" y="740.300">1</text>
<text class="tb" x="1197" y="740.300" textLength="86.600" lengthAdjust="spacingAndGlyphs">MULT OF 500</text>
<text class="tb" x="1345" y="740.300" textLength="82" lengthAdjust="spacingAndGlyphs">500 period 6</text>
</g>

<!-- product tree picture -->
<rect x="709" y="247" width="422.500" height="247" fill="#fff" stroke="#000" stroke-width="4" filter="url(#ish)"/>
<path fill="none" stroke="#111" stroke-width="1.500" d="M919.300 306.700V355.700M755 355.700V322.300H1083.300V355.700M1083.300 405.300V438.300"/>
<g fill="#fff" stroke="#8a8a8a" stroke-width="1.400">
<rect x="878.500" y="257.500" width="82" height="49"/>
<rect x="714" y="355.800" width="82.300" height="49.500"/>
<rect x="878.500" y="355.800" width="82" height="49.500"/>
<rect x="1042.500" y="355.800" width="82" height="49.500"/>
<rect x="1042.500" y="438.500" width="82" height="49.200"/>
</g>
<text class="pr" x="919.500" y="278.700">PRODUCT A</text><text class="pr" x="919.500" y="292.700">LT=2</text>
<text class="pr" x="755" y="370.300">PRODUCT B</text><text class="pr" x="755" y="384.300">LT=1</text><text class="pr" x="755" y="398">QTY PER=2</text>
<text class="pr" x="919.500" y="370.300">PRODUCT C</text><text class="pr" x="919.500" y="384.300">LT=2</text><text class="pr" x="919.500" y="398">QTY PER=2</text>
<text class="pr" x="1083.500" y="370.300">PRODUCT D</text><text class="pr" x="1083.500" y="384.300">LT=2</text><text class="pr" x="1083.500" y="398">QTY PER=3</text>
<text class="pr" x="1083.500" y="452.700">PRODUCT E</text><text class="pr" x="1083.500" y="466.700">LT=1</text><text class="pr" x="1083.500" y="480.500">QTY PER=2</text>
</svg>
</body></html>
